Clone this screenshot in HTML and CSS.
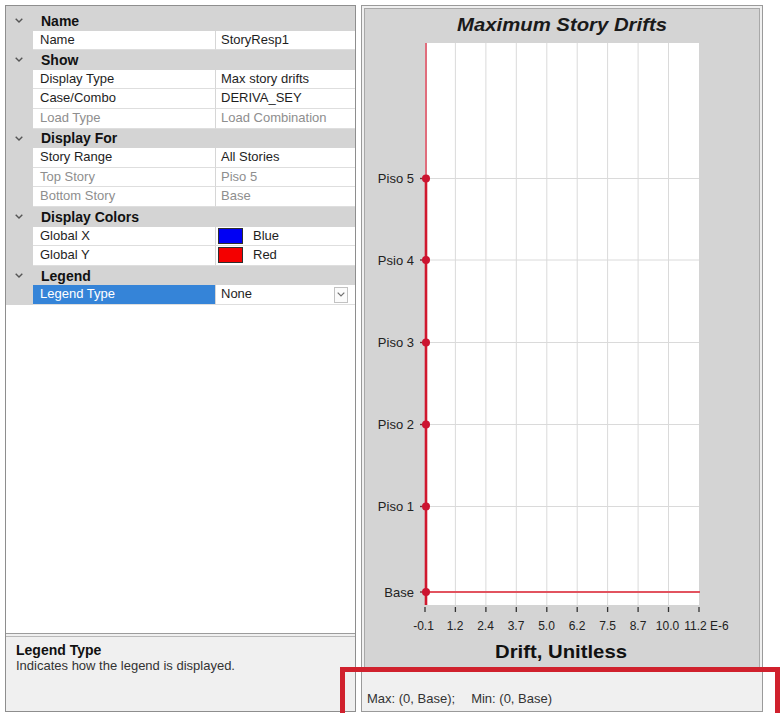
FILE: index.html
```html
<!DOCTYPE html>
<html>
<head>
<meta charset="utf-8">
<title>Story Response</title>
<link rel="stylesheet" href="styles.css">
</head>
<body>
<div class="app">
  <section class="props">
    <div class="grid">
      <div class="grid-top"></div>

      <div class="cat"><span class="toggle"><svg class="chev" viewBox="0 0 8 5" width="8" height="5"><polyline points="0.7,0.7 4,4 7.3,0.7"/></svg></span><span class="cat-name">Name</span></div>
      <div class="prop"><span class="gutter"></span><span class="label">Name</span><span class="value">StoryResp1</span></div>

      <div class="cat"><span class="toggle"><svg class="chev" viewBox="0 0 8 5" width="8" height="5"><polyline points="0.7,0.7 4,4 7.3,0.7"/></svg></span><span class="cat-name">Show</span></div>
      <div class="prop"><span class="gutter"></span><span class="label">Display Type</span><span class="value">Max story drifts</span></div>
      <div class="prop"><span class="gutter"></span><span class="label">Case/Combo</span><span class="value">DERIVA_SEY</span></div>
      <div class="prop dis"><span class="gutter"></span><span class="label">Load Type</span><span class="value">Load Combination</span></div>

      <div class="cat"><span class="toggle"><svg class="chev" viewBox="0 0 8 5" width="8" height="5"><polyline points="0.7,0.7 4,4 7.3,0.7"/></svg></span><span class="cat-name">Display For</span></div>
      <div class="prop"><span class="gutter"></span><span class="label">Story Range</span><span class="value">All Stories</span></div>
      <div class="prop dis"><span class="gutter"></span><span class="label">Top Story</span><span class="value">Piso 5</span></div>
      <div class="prop dis"><span class="gutter"></span><span class="label">Bottom Story</span><span class="value">Base</span></div>

      <div class="cat"><span class="toggle"><svg class="chev" viewBox="0 0 8 5" width="8" height="5"><polyline points="0.7,0.7 4,4 7.3,0.7"/></svg></span><span class="cat-name">Display Colors</span></div>
      <div class="prop"><span class="gutter"></span><span class="label">Global X</span><span class="value color"><span class="swatch swatch-blue"></span>Blue</span></div>
      <div class="prop"><span class="gutter"></span><span class="label">Global Y</span><span class="value color"><span class="swatch swatch-red"></span>Red</span></div>

      <div class="cat"><span class="toggle"><svg class="chev" viewBox="0 0 8 5" width="8" height="5"><polyline points="0.7,0.7 4,4 7.3,0.7"/></svg></span><span class="cat-name">Legend</span></div>
      <div class="prop"><span class="gutter"></span><span class="label sel">Legend Type</span><span class="value combo">None<span class="dd"><svg viewBox="0 0 8 5" width="8" height="5"><polyline points="0.7,0.7 4,4 7.3,0.7"/></svg></span></span></div>
    </div>
    <div class="desc">
      <div class="desc-title">Legend Type</div>
      <div class="desc-text">Indicates how the legend is displayed.</div>
    </div>
  </section>

  <section class="plot-panel">
    <svg class="chart" width="396" height="659" viewBox="364 8 396 659">
      <rect class="frame" x="364.5" y="8.5" width="395" height="659"/>
      <text class="title" x="562" y="31" textLength="210" lengthAdjust="spacingAndGlyphs">Maximum Story Drifts</text>

      <!-- plot area -->
      <rect x="427" y="43" width="272" height="562" fill="#fff"/>
      <g class="grid-lines">
        <line x1="455.4" y1="43" x2="455.4" y2="605"/>
        <line x1="485.9" y1="43" x2="485.9" y2="605"/>
        <line x1="516.3" y1="43" x2="516.3" y2="605"/>
        <line x1="546.8" y1="43" x2="546.8" y2="605"/>
        <line x1="577.2" y1="43" x2="577.2" y2="605"/>
        <line x1="607.6" y1="43" x2="607.6" y2="605"/>
        <line x1="638.1" y1="43" x2="638.1" y2="605"/>
        <line x1="668.5" y1="43" x2="668.5" y2="605"/>
        <line x1="427" y1="178.5" x2="699" y2="178.5"/>
        <line x1="427" y1="260" x2="699" y2="260"/>
        <line x1="427" y1="342.5" x2="699" y2="342.5"/>
        <line x1="427" y1="424.5" x2="699" y2="424.5"/>
        <line x1="427" y1="506.5" x2="699" y2="506.5"/>
      </g>

      <!-- drift series -->
      <line class="series-top" x1="426" y1="43" x2="426" y2="178.5"/>
      <line class="series" x1="426" y1="178.5" x2="426" y2="605"/>
      <line class="base-line" x1="426" y1="592" x2="700" y2="592"/>

      <!-- story ticks and markers -->
      <g class="ytick">
        <line x1="420" y1="178.5" x2="426" y2="178.5"/>
        <line x1="420" y1="260" x2="426" y2="260"/>
        <line x1="420" y1="342.5" x2="426" y2="342.5"/>
        <line x1="420" y1="424.5" x2="426" y2="424.5"/>
        <line x1="420" y1="506.5" x2="426" y2="506.5"/>
        <line x1="420" y1="592" x2="426" y2="592"/>
      </g>
      <g class="marker">
        <circle cx="426" cy="178.5" r="4"/>
        <circle cx="426" cy="260" r="4"/>
        <circle cx="426" cy="342.5" r="4"/>
        <circle cx="426" cy="424.5" r="4"/>
        <circle cx="426" cy="506.5" r="4"/>
        <circle cx="426" cy="592" r="4"/>
      </g>
      <g class="ylabel">
        <text x="414" y="183">Piso 5</text>
        <text x="414" y="264.5">Psio 4</text>
        <text x="414" y="347">Piso 3</text>
        <text x="414" y="429">Piso 2</text>
        <text x="414" y="511">Piso 1</text>
        <text x="414" y="596.5">Base</text>
      </g>

      <!-- drift axis -->
      <g class="xtick">
        <line x1="425" y1="607" x2="425" y2="612"/>
        <line x1="455.4" y1="607" x2="455.4" y2="612"/>
        <line x1="485.9" y1="607" x2="485.9" y2="612"/>
        <line x1="516.3" y1="607" x2="516.3" y2="612"/>
        <line x1="546.8" y1="607" x2="546.8" y2="612"/>
        <line x1="577.2" y1="607" x2="577.2" y2="612"/>
        <line x1="607.6" y1="607" x2="607.6" y2="612"/>
        <line x1="638.1" y1="607" x2="638.1" y2="612"/>
        <line x1="668.5" y1="607" x2="668.5" y2="612"/>
        <line x1="699" y1="607" x2="699" y2="612"/>
      </g>
      <g class="xlabel">
        <text x="423.5" y="629.5">-0.1</text>
        <text x="455" y="629.5">1.2</text>
        <text x="485.5" y="629.5">2.4</text>
        <text x="516" y="629.5">3.7</text>
        <text x="546.5" y="629.5">5.0</text>
        <text x="577" y="629.5">6.2</text>
        <text x="607.5" y="629.5">7.5</text>
        <text x="638" y="629.5">8.7</text>
        <text x="667.5" y="629.5">10.0</text>
        <text x="695.5" y="629.5">11.2</text>
        <text class="exp" x="710" y="629.5">E-6</text>
      </g>
      <text class="axis-title" x="561" y="658" textLength="132" lengthAdjust="spacingAndGlyphs">Drift, Unitless</text>
    </svg>
    <div class="status"><span>Max: (0, Base);</span><span>Min: (0, Base)</span></div>
  </section>
</div>
<div class="callout"></div>
</body>
</html>
```

FILE: styles.css
```css
html, body {
  margin: 0;
  height: 100%;
  overflow: hidden;
  background: #fff;
}

body {
  position: relative;
  font-family: "Liberation Sans", Arial, sans-serif;
  color: #1e1e1e;
}

.app {
  display: flex;
  gap: 5px;
  padding: 5px 0 0 5px;
  height: 712px;
  box-sizing: border-box;
}

/* ---------- property grid ---------- */
.props {
  width: 351px;
  box-sizing: border-box;
  border: 1px solid #8e8e8e;
  background: #f0f0f0;
  display: flex;
  flex-direction: column;
}

.grid {
  flex: 1;
  background: #fff;
  border-bottom: 1px solid #9c9c9c;
}

.grid-top {
  height: 5px;
  background: #d4d4d4;
}

.cat {
  display: flex;
  align-items: center;
  height: 19.6px;
  background: #d4d4d4;
  font-size: 14px;
  font-weight: bold;
  color: #111;
}

.toggle {
  display: flex;
  align-items: center;
  width: 27px;
  padding-left: 9px;
  box-sizing: border-box;
}

.chev polyline,
.dd polyline {
  fill: none;
  stroke: #555;
  stroke-width: 1.4;
}

.cat-name {
  padding-left: 8px;
}

.prop {
  display: grid;
  grid-template-columns: 27px 183px 1fr;
  height: 19.6px;
  font-size: 13px;
}

.gutter {
  background: #d4d4d4;
}

.label,
.value {
  box-sizing: border-box;
  border-bottom: 1px solid #dedede;
  line-height: 18.6px;
  white-space: nowrap;
  overflow: hidden;
}

.label {
  padding-left: 7px;
  border-right: 1px solid #d6d6d6;
}

.value {
  padding-left: 5px;
}

.dis .label,
.dis .value {
  color: #8e8e8e;
}

.label.sel {
  background: #3584d8;
  color: #fff;
}

.value.color {
  display: flex;
  align-items: center;
  padding-left: 2px;
}

.swatch {
  width: 25px;
  height: 16px;
  box-sizing: border-box;
  border: 1px solid #2e2e2e;
  margin-right: 10px;
}

.swatch-blue { background: #0000f4; }
.swatch-red { background: #f40000; }

.value.combo {
  display: flex;
  align-items: center;
}

.dd {
  display: flex;
  align-items: center;
  justify-content: center;
  width: 14px;
  height: 16px;
  box-sizing: border-box;
  margin-left: auto;
  margin-right: 7px;
  border: 1px solid #c2c2c2;
  background: #fbfbfb;
}

.dd polyline {
  stroke: #707070;
  stroke-width: 1.2;
}

.desc {
  margin-top: 2px;
  height: 75px;
  box-sizing: border-box;
  border-top: 1px solid #b8b8b8;
  padding: 5px 10px 0;
  background: #f0f0f0;
}

.desc-title {
  font-size: 14px;
  font-weight: bold;
  line-height: 16px;
  color: #111;
}

.desc-text {
  font-size: 13px;
  line-height: 15px;
  color: #333;
}

/* ---------- story drift plot ---------- */
.plot-panel {
  width: 402px;
  box-sizing: border-box;
  border: 1px solid #9a9a9a;
  padding: 2px;
  background: #f0f0f0;
  display: flex;
  flex-direction: column;
}

.chart {
  display: block;
  background: #d4d4d4;
  font-family: "Liberation Sans", Arial, sans-serif;
}

.chart .frame {
  fill: none;
  stroke: #a8a8a8;
  stroke-width: 1;
}

.chart .title {
  font-size: 18px;
  font-weight: bold;
  font-style: italic;
  text-anchor: middle;
  fill: #1a1a1a;
}

.grid-lines line {
  stroke: #dadada;
  stroke-width: 1;
}

.series-top {
  stroke: #e45366;
  stroke-width: 1.6;
}

.series {
  stroke: #d0182e;
  stroke-width: 2.6;
}

.base-line {
  stroke: #e2535f;
  stroke-width: 2;
}

.ytick line {
  stroke: #7a2a30;
  stroke-width: 1.4;
}

.marker circle {
  fill: #cc1430;
}

.ylabel text {
  font-size: 13px;
  text-anchor: end;
  fill: #222;
}

.xtick line {
  stroke: #333;
  stroke-width: 1.3;
}

.xlabel text {
  font-size: 12px;
  text-anchor: middle;
  fill: #222;
}

.xlabel .exp {
  text-anchor: start;
}

.chart .axis-title {
  font-size: 19px;
  font-weight: bold;
  text-anchor: middle;
  fill: #111;
}

.status {
  flex: 1;
  display: flex;
  gap: 16px;
  padding: 24px 0 0 3px;
  font-size: 13px;
  line-height: 15px;
  color: #333;
  background: #f0f0f0;
}

/* red annotation frame over the status line */
.callout {
  position: absolute;
  left: 340px;
  top: 667px;
  width: 440px;
  height: 60px;
  box-sizing: border-box;
  border: 5px solid #d0212d;
}
```
